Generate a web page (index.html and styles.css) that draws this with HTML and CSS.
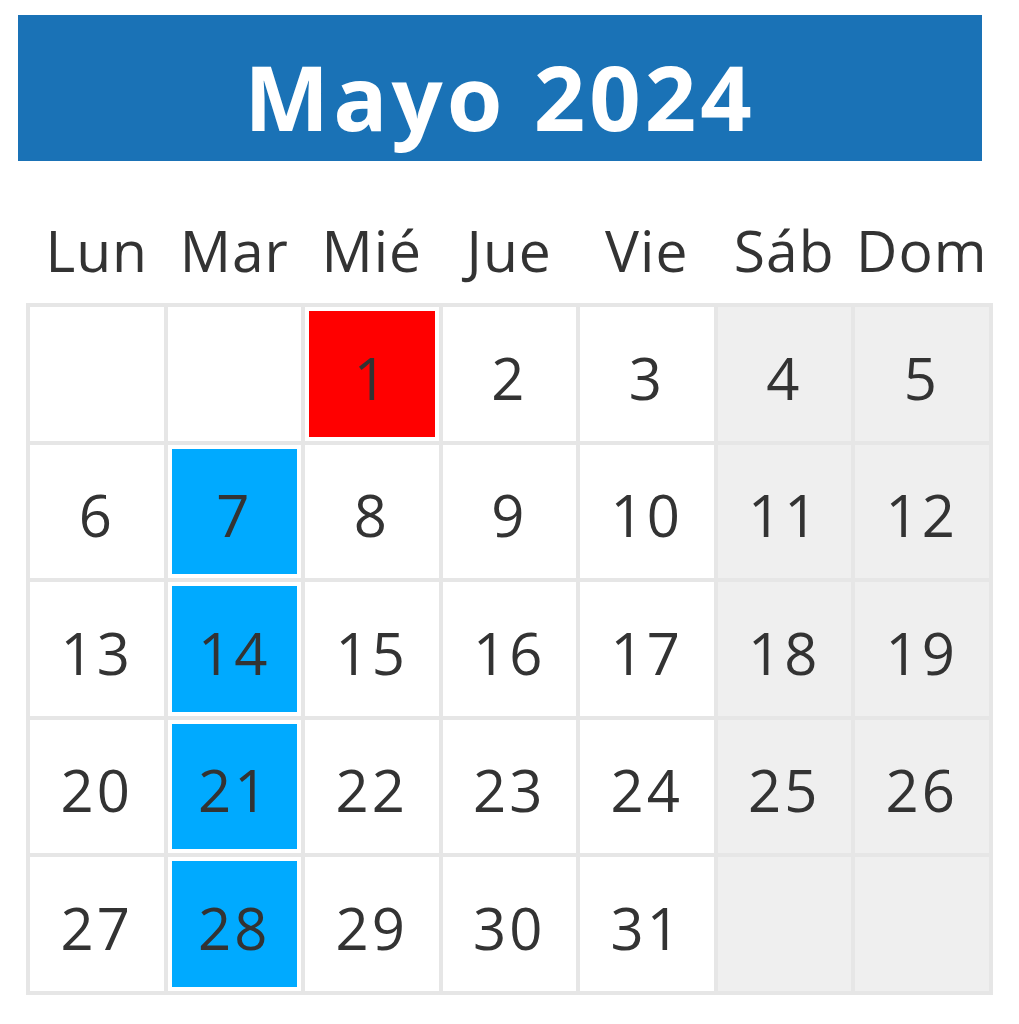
FILE: index.html
```html
<!DOCTYPE html>
<html lang="es">
<head>
<meta charset="utf-8">
<title>Mayo 2024</title>
<link rel="stylesheet" href="styles.css">
</head>
<body>
<main class="calendar">
  <header class="banner"><h1 class="title">Mayo 2024</h1></header>
  <div class="weekdays">
    <div class="wd">Lun</div><div class="wd">Mar</div><div class="wd">Mié</div><div class="wd">Jue</div><div class="wd">Vie</div><div class="wd">Sáb</div><div class="wd">Dom</div>
  </div>
  <div class="grid">
    <div class="cell"><span class="day"></span></div>
    <div class="cell"><span class="day"></span></div>
    <div class="cell"><span class="day red">1</span></div>
    <div class="cell"><span class="day">2</span></div>
    <div class="cell"><span class="day">3</span></div>
    <div class="cell weekend"><span class="day">4</span></div>
    <div class="cell weekend"><span class="day">5</span></div>

    <div class="cell"><span class="day">6</span></div>
    <div class="cell"><span class="day blue">7</span></div>
    <div class="cell"><span class="day">8</span></div>
    <div class="cell"><span class="day">9</span></div>
    <div class="cell"><span class="day">10</span></div>
    <div class="cell weekend"><span class="day">11</span></div>
    <div class="cell weekend"><span class="day">12</span></div>

    <div class="cell"><span class="day">13</span></div>
    <div class="cell"><span class="day blue">14</span></div>
    <div class="cell"><span class="day">15</span></div>
    <div class="cell"><span class="day">16</span></div>
    <div class="cell"><span class="day">17</span></div>
    <div class="cell weekend"><span class="day">18</span></div>
    <div class="cell weekend"><span class="day">19</span></div>

    <div class="cell"><span class="day">20</span></div>
    <div class="cell"><span class="day blue">21</span></div>
    <div class="cell"><span class="day">22</span></div>
    <div class="cell"><span class="day">23</span></div>
    <div class="cell"><span class="day">24</span></div>
    <div class="cell weekend"><span class="day">25</span></div>
    <div class="cell weekend"><span class="day">26</span></div>

    <div class="cell"><span class="day">27</span></div>
    <div class="cell"><span class="day blue">28</span></div>
    <div class="cell"><span class="day">29</span></div>
    <div class="cell"><span class="day">30</span></div>
    <div class="cell"><span class="day">31</span></div>
    <div class="cell weekend"><span class="day"></span></div>
    <div class="cell weekend"><span class="day"></span></div>
  </div>
</main>
</body>
</html>
```
FILE: styles.css
```css
* { box-sizing: border-box; }
html, body { margin: 0; padding: 0; background: #ffffff; }
body {
  font-family: "Open Sans", "Noto Sans", "Liberation Sans", sans-serif;
  color: #333333;
}
.calendar {
  width: 1019px;
  padding-top: 15px;
}
.banner {
  margin-left: 18px;
  width: 964px;
  height: 146px;
  background: #1a72b6;
  padding-top: 36px;
}
.title {
  margin: 0;
  font-size: 90px;
  line-height: 90px;
  font-weight: 700;
  color: #ffffff;
  text-align: center;
  letter-spacing: 4px;
}
.weekdays {
  margin-left: 26px;
  display: grid;
  grid-template-columns: repeat(7, 133.5px);
  column-gap: 4px;
  padding: 61px 4px 24px;
}
.wd {
  font-size: 57px;
  line-height: 57px;
  text-align: center;
  letter-spacing: 1px;
  white-space: nowrap;
}
.grid {
  margin-left: 26px;
  width: 966.5px;
  display: grid;
  grid-template-columns: repeat(7, 133.5px);
  grid-auto-rows: 133.5px;
  gap: 4px;
  padding: 4px;
  background: #e6e6e6;
}
.cell {
  background: #ffffff;
  padding: 4px;
  display: flex;
}
.cell.weekend { background: #efefef; }
.day {
  flex: 1;
  display: flex;
  align-items: center;
  justify-content: center;
  padding-top: 8px;
  font-size: 58px;
  line-height: 58px;
  letter-spacing: 3px;
}
.day.red { background: #ff0000; }
.day.blue { background: #00aaff; }
```
